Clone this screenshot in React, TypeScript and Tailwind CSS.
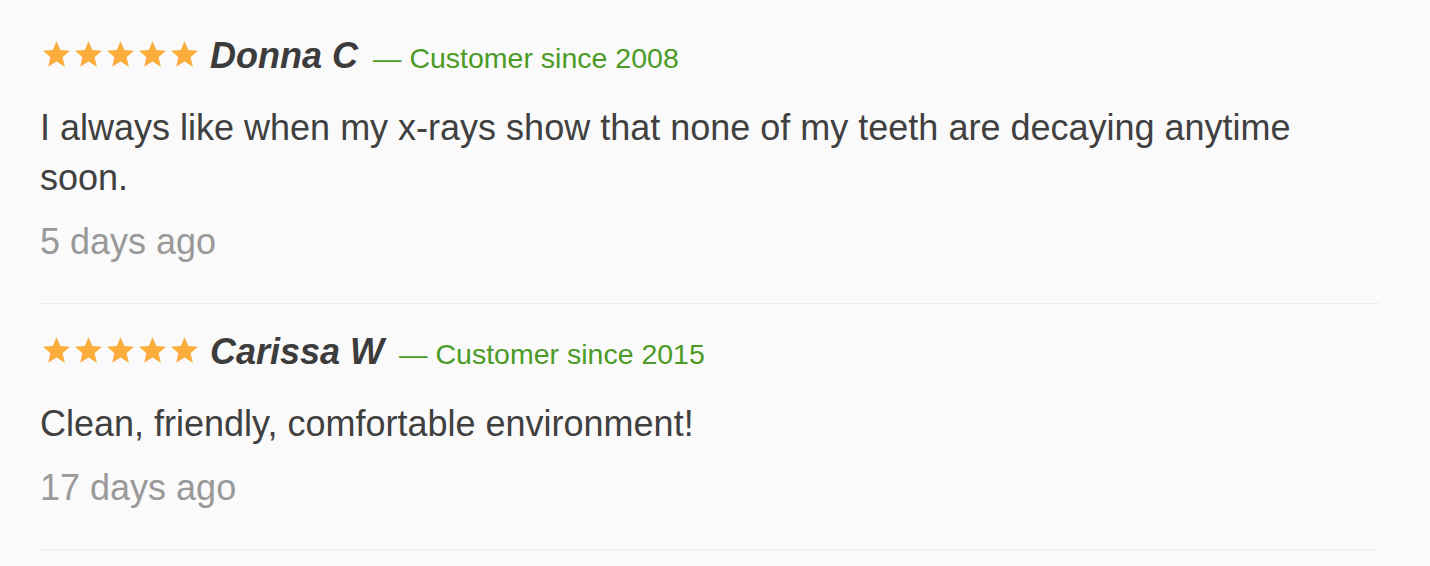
import React from "react";

const Star = () => (
  <svg width="27" height="26" viewBox="0 0 27 26" className="shrink-0">
    <polygon
      points="13.5,0 17.26,9.02 27,9.81 19.59,16.18 21.85,25.69 13.5,20.6 5.15,25.69 7.41,16.18 0,9.81 9.74,9.02"
      fill="#fdac3e"
    />
  </svg>
);

const reviews = [
  {
    name: "Donna C",
    since: "2008",
    text: "I always like when my x-rays show that none of my teeth are decaying anytime soon.",
    when: "5 days ago",
  },
  {
    name: "Carissa W",
    since: "2015",
    text: "Clean, friendly, comfortable environment!",
    when: "17 days ago",
  },
];

export default function App() {
  return (
    <div
      className="min-h-[566px] w-[1430px] bg-[#fafafa] pt-[8px] pl-[40px]"
      style={{ fontFamily: '"Liberation Sans", Arial, Helvetica, sans-serif' }}
    >
      <div className="w-[1340px]">
        {reviews.map((r) => (
          <div key={r.name} className="border-b border-[#eeeef2] pt-[29px] pb-[36px]">
            <div className="flex h-[40px] items-center">
              <div className="mb-[7px] flex gap-[5px] pl-[3px]">
                <Star />
                <Star />
                <Star />
                <Star />
                <Star />
              </div>
              <div className="ml-[12px] flex items-baseline">
                <span className="text-[36px] leading-[40px] font-bold italic text-[#3c3c3c]">
                  {r.name}
                </span>
                <span className="ml-[15px] text-[28.5px] leading-[40px] text-[#4b9b26]">
                  — Customer since {r.since}
                </span>
              </div>
            </div>
            <p className="mt-[26px] text-[36px] leading-[50px] text-[#404040]">{r.text}</p>
            <p className="mt-[14px] text-[36px] leading-[50px] text-[#999999]">{r.when}</p>
          </div>
        ))}
      </div>
    </div>
  );
}
